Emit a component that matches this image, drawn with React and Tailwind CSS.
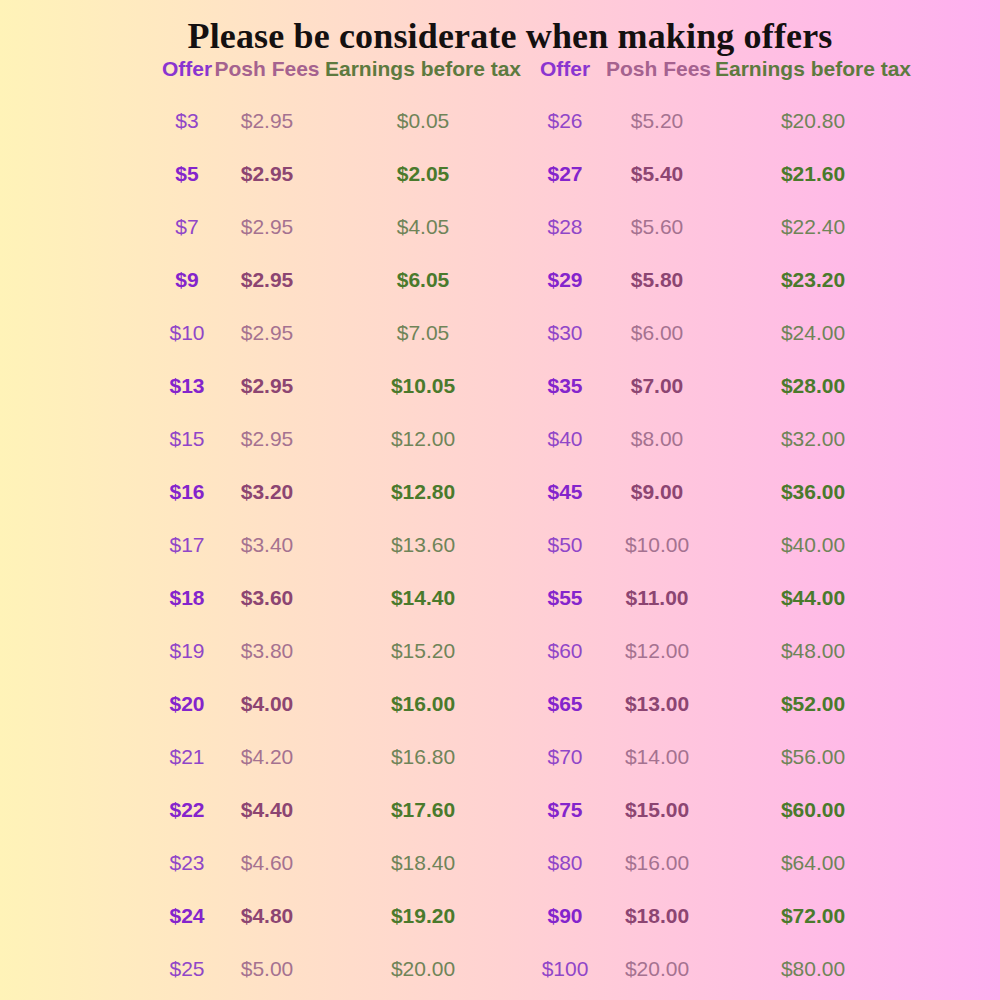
import React from 'react';

// offer, fee, earnings — left half then right half of the chart
const leftRows = [
  ['$3', '$2.95', '$0.05'],
  ['$5', '$2.95', '$2.05'],
  ['$7', '$2.95', '$4.05'],
  ['$9', '$2.95', '$6.05'],
  ['$10', '$2.95', '$7.05'],
  ['$13', '$2.95', '$10.05'],
  ['$15', '$2.95', '$12.00'],
  ['$16', '$3.20', '$12.80'],
  ['$17', '$3.40', '$13.60'],
  ['$18', '$3.60', '$14.40'],
  ['$19', '$3.80', '$15.20'],
  ['$20', '$4.00', '$16.00'],
  ['$21', '$4.20', '$16.80'],
  ['$22', '$4.40', '$17.60'],
  ['$23', '$4.60', '$18.40'],
  ['$24', '$4.80', '$19.20'],
  ['$25', '$5.00', '$20.00'],
];

const rightRows = [
  ['$26', '$5.20', '$20.80'],
  ['$27', '$5.40', '$21.60'],
  ['$28', '$5.60', '$22.40'],
  ['$29', '$5.80', '$23.20'],
  ['$30', '$6.00', '$24.00'],
  ['$35', '$7.00', '$28.00'],
  ['$40', '$8.00', '$32.00'],
  ['$45', '$9.00', '$36.00'],
  ['$50', '$10.00', '$40.00'],
  ['$55', '$11.00', '$44.00'],
  ['$60', '$12.00', '$48.00'],
  ['$65', '$13.00', '$52.00'],
  ['$70', '$14.00', '$56.00'],
  ['$75', '$15.00', '$60.00'],
  ['$80', '$16.00', '$64.00'],
  ['$90', '$18.00', '$72.00'],
  ['$100', '$20.00', '$80.00'],
];

const gridCols = 'grid grid-cols-[50px_110px_202px_82px_102px_210px] items-center text-center';

const Header = () => (
  <div className={`${gridCols} h-[24px] text-[21px] font-bold leading-none whitespace-nowrap`}>
    <span className="text-[#8a35d0]">Offer</span>
    <span className="text-[#a5628f]">Posh Fees</span>
    <span className="text-[#5d7a3f]">Earnings before tax</span>
    <span className="text-[#8a35d0]">Offer</span>
    <span className="text-[#a5628f]">Posh Fees</span>
    <span className="text-[#5d7a3f]">Earnings before tax</span>
  </div>
);

const Row = ({ left, right, bold }) => {
  const offer = bold ? 'text-[#8424cc]' : 'text-[#9046c8]';
  const fee = bold ? 'text-[#8c4572]' : 'text-[#a57290]';
  const earn = bold ? 'text-[#4a7a2c]' : 'text-[#6f8458]';
  return (
    <div className={`${gridCols} h-[53px] text-[21px] leading-none ${bold ? 'font-bold' : 'font-normal'}`}>
      <span className={offer}>{left[0]}</span>
      <span className={fee}>{left[1]}</span>
      <span className={earn}>{left[2]}</span>
      <span className={offer}>{right[0]}</span>
      <span className={fee}>{right[1]}</span>
      <span className={earn}>{right[2]}</span>
    </div>
  );
};

export default function App() {
  return (
    <div className="w-[1000px] h-[1000px] overflow-hidden bg-linear-to-r from-[#fff3b8] via-[#ffd2d2] to-[#ffaef0] font-['Liberation_Sans',Arial,sans-serif]">
      <h1 className="pt-[15px] pl-[20px] h-[56px] text-center text-[36px] leading-[42px] font-bold tracking-[0.15px] text-[#141010] font-['Liberation_Serif',serif]">
        Please be considerate when making offers
      </h1>
      <div className="pl-[162px]">
        <Header />
        <div className="mt-[14px] flex flex-col">
          {leftRows.map((l, i) => (
            <Row key={i} left={l} right={rightRows[i]} bold={i % 2 === 1} />
          ))}
        </div>
      </div>
    </div>
  );
}
